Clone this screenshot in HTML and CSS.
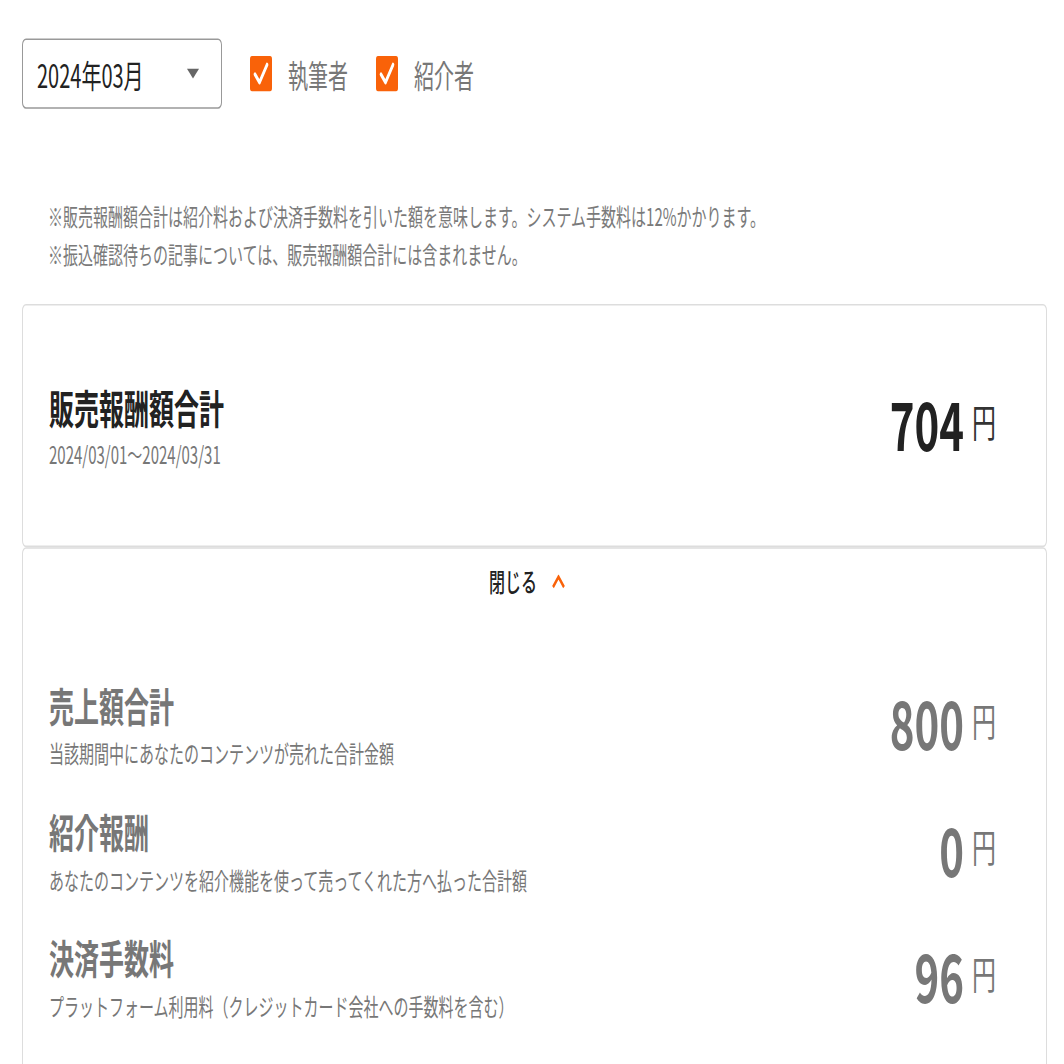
FILE: index.html
```html
<!DOCTYPE html>
<html>

	<head>
		<meta charset="UTF-8">
		<title>売上管理</title>
		<link rel="stylesheet" href="styles.css">
	</head>

	<body>
		<div class="screen">
			<div class="page">
				<div class="filter">
					<div class="select">
						<span>2024年03月</span>
						<span class="caret"></span>
					</div>
					<label class="check">
						<span class="box"><svg viewBox="0 0 22 22" width="22" height="22"><path d="M5 11.5 L9.5 16.5 L17 5.5" fill="none" stroke="#fff" stroke-width="2.6" stroke-linecap="round" stroke-linejoin="round"/></svg></span>
						執筆者
					</label>
					<label class="check">
						<span class="box"><svg viewBox="0 0 22 22" width="22" height="22"><path d="M5 11.5 L9.5 16.5 L17 5.5" fill="none" stroke="#fff" stroke-width="2.6" stroke-linecap="round" stroke-linejoin="round"/></svg></span>
						紹介者
					</label>
				</div>

				<div class="notes">
					<p>※販売報酬額合計は紹介料および決済手数料を引いた額を意味します。システム手数料は12%かかります。</p>
					<p>※振込確認待ちの記事については、販売報酬額合計には含まれません。</p>
				</div>

				<!-- 合計 -->
				<div class="card total">
					<div class="label">
						<h2>販売報酬額合計</h2>
						<p class="period">2024/03/01〜2024/03/31</p>
					</div>
					<div class="amount">
						<span class="num">704</span>
						<span class="yen">円</span>
					</div>
				</div>

				<!-- 内訳 -->
				<div class="card detail">
					<div class="toggle">
						閉じる
						<svg viewBox="0 0 15 9" width="15" height="9"><path d="M2 8 L7.5 1.6 L13 8" fill="none" stroke="#f96209" stroke-width="2.2"/></svg>
					</div>

					<div class="row">
						<div class="label">
							<h3>売上額合計</h3>
							<p>当該期間中にあなたのコンテンツが売れた合計金額</p>
						</div>
						<div class="amount">
							<span class="num">800</span>
							<span class="yen">円</span>
						</div>
					</div>
					<div class="row">
						<div class="label">
							<h3>紹介報酬</h3>
							<p>あなたのコンテンツを紹介機能を使って売ってくれた方へ払った合計額</p>
						</div>
						<div class="amount">
							<span class="num">0</span>
							<span class="yen">円</span>
						</div>
					</div>
					<div class="row">
						<div class="label">
							<h3>決済手数料</h3>
							<p>プラットフォーム利用料（クレジットカード会社への手数料を含む）</p>
						</div>
						<div class="amount">
							<span class="num">96</span>
							<span class="yen">円</span>
						</div>
					</div>
				</div>
			</div>
		</div>
	</body>

</html>
```

FILE: styles.css
```css
* {
	margin: 0;
	padding: 0;
	box-sizing: border-box;
}

body {
	font-family: "Noto Sans CJK JP", "Noto Sans", sans-serif;
	color: #333;
	background: #fff;
}

.screen {
	width: 1064px;
	height: 1064px;
	overflow: hidden;
}

/* 元画面は縦に引き伸ばされている */
.page {
	width: 1064px;
	padding: 24px 17px 0 22px;
	transform: scaleY(1.6);
	transform-origin: 0 0;
}

.filter {
	display: flex;
	align-items: center;
}

.select {
	width: 200px;
	height: 44px;
	border: 1px solid #999;
	border-radius: 4px;
	display: flex;
	align-items: center;
	justify-content: space-between;
	padding: 0 22px 0 14px;
	font-size: 20px;
	color: #222;
}

.caret {
	width: 0;
	height: 0;
	border-left: 6px solid transparent;
	border-right: 6px solid transparent;
	border-top: 6px solid #666;
}

.check {
	display: flex;
	align-items: center;
	gap: 16px;
	margin-left: 28px;
	font-size: 20px;
	color: #777;
}

.check .box {
	width: 22px;
	height: 22px;
	border-radius: 2px;
	background: #f96209;
	display: flex;
}

.notes {
	margin: 55px 0 0 26px;
	font-size: 15px;
	line-height: 24px;
	color: #7a7a7a;
}

.card {
	border: 1px solid #ddd;
	border-radius: 4px;
	padding: 0 50px 0 26px;
}

.total {
	margin-top: 19px;
	height: 152px;
	display: flex;
	align-items: center;
	justify-content: space-between;
}

.total h2 {
	font-size: 25px;
	line-height: 34px;
	font-weight: 700;
	color: #222;
}

.total .period {
	font-size: 15px;
	line-height: 24px;
	margin-top: 1px;
	color: #777;
}

.amount {
	display: flex;
	align-items: center;
	margin-bottom: 5px;
}

.amount .num {
	font-size: 42px;
	font-weight: 700;
	line-height: 50px;
	color: #222;
}

.amount .yen {
	font-size: 24px;
	margin-left: 8px;
	margin-bottom: 3px;
	color: #333;
}

.detail {
	padding-bottom: 80px;
}

.toggle {
	display: flex;
	align-items: center;
	justify-content: center;
	gap: 14px;
	margin-top: 8px;
	font-size: 16px;
	line-height: 24px;
	font-weight: 500;
	color: #222;
	padding-left: 10px;
}

.row {
	display: flex;
	align-items: center;
	justify-content: space-between;
	margin-top: 19px;
}

.toggle + .row {
	margin-top: 48px;
}

.row h3 {
	font-size: 25px;
	line-height: 34px;
	font-weight: 700;
	color: #777;
}

.row p {
	font-size: 15px;
	line-height: 24px;
	margin-top: 2px;
	color: #777;
}

.row .num {
	color: #777;
}

.row .yen {
	color: #777;
}
```
